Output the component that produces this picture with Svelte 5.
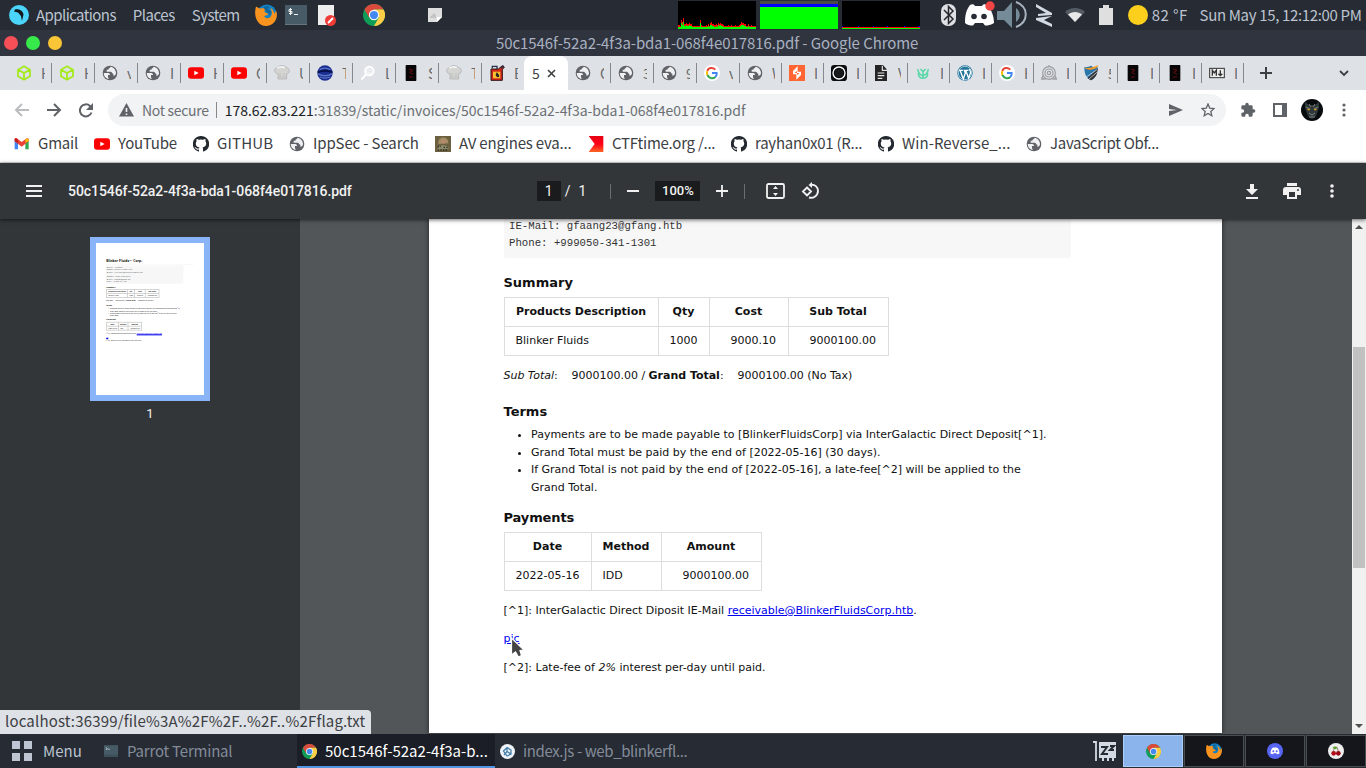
<script>
  const before = [
    ['cube', 'H'], ['cube', 'H'], ['globe', 'v'], ['globe', 'I'], ['youtube', 'H'], ['youtube', 'C'],
    ['chef', 'U'], ['ball', 'T'], ['lens', 'L'], ['dark', 'S'], ['chef', 'T'], ['can', 'E']
  ];
  const after = [
    ['globe', 'C'], ['globe', '3'], ['globe', '9'], ['google', 'v'], ['globe', 'W'], ['burp', 'I'],
    ['ring', 'I'], ['file', 'V'], ['owl', 'I'], ['wordpress', 'I'], ['google', 'H'], ['badge', 'I'],
    ['shield', '5'], ['dark', 'I'], ['dark', 'I'], ['markdown', 'I']
  ];
  const bookmarks = [
    ['gmail', 'Gmail', 40, 22], ['youtube', 'YouTube', 59, 102], ['github', 'GITHUB', 56, 201],
    ['globe', 'IppSec - Search', 106, 297], ['photo', 'AV engines eva...', 113, 443],
    ['ctf', 'CTFtime.org /...', 103, 596], ['github', 'rayhan0x01 (R...', 107, 739],
    ['github', 'Win-Reverse_...', 108, 886], ['globe', 'JavaScript Obf...', 109, 1034]
  ];
  const cpu = [2,2,1,7,5,9,3,3,4,3,3,4,3,3,1,1,1,1,1,1,1,1,7,2,1,1,1,1,2,1,3,1,4,5,3,3,2,2,3,2,4,3,4,3,3,2,1,1,1,1,2,1,1,2,1,1,1,2,1,1,1,2,3,5,4,4,3,3,1,1,3,1,1,2,1,1,1,1];

  // Spreads the letters of a label evenly so that it takes up a given width.
  function fit(node, width) {
    const n = node.textContent.trim().length;
    const extra = width - node.offsetWidth;
    node.style.letterSpacing = extra / n + 'px';
  }
</script>

{#snippet icon(name, size = 16)}
  <svg class="icon" width={size} height={size} viewBox="0 0 24 24">
    {#if name === 'cube'}
      <path d="M12 2 21 7v10l-9 5-9-5V7z M3 7l9 5 9-5M12 12v10" fill="none" stroke="#a3ea18" stroke-width="2.6" stroke-linejoin="round" />
    {:else if name === 'globe'}
      <circle cx="12" cy="12" r="11" fill="#5f6368" />
      <path d="M13 2.500c-1 2.500-3.500 2-3.500 4.500H7v3h6c2 0 2 3 4 3v3c3 0 4-2 4-4 0-5-4-9-8-9.500zM2.700 12H8c3 0 4 1 4 3H9v3c0 1 1 1 1 3-4-.5-7.500-4.500-7.300-9z" fill="#eef0f2" />
    {:else if name === 'youtube'}
      <rect x="0" y="3.500" width="24" height="17" rx="4.500" fill="#f00" /><path d="m9.500 8.500 6.500 3.500-6.500 3.500z" fill="#fff" />
    {:else if name === 'chef'}
      <path d="M6 21V13C0 13-1 5 5 4c3-4 11-4 14 0 6 1 5 9 0 9v8z" fill="#d4d4d2" stroke="#aaa" /><path d="M6 18h13M9 12v5M15 12v5" stroke="#b8b8b8" />
      <path d="M5 5c4-3 7-3 11-1" fill="none" stroke="#fff" stroke-width="2" />
    {:else if name === 'ball'}
      <circle cx="12" cy="12" r="11.500" fill="#1c2f91" /><path d="M4 7c5-3 11-3 16 0M1 13c7 4 15 4 22 0M4 18c5 2 11 2 16 0" fill="none" stroke="#5b75c4" stroke-width="2" /><path d="M1 11c7-3 15-3 22 0" fill="none" stroke="#07104b" stroke-width="3" />
    {:else if name === 'lens'}
      <circle cx="14" cy="9" r="6.500" fill="#eef0f2" stroke="#fff" stroke-width="2.500" /><path d="m9 14-7 8" stroke="#fff" stroke-width="3" /><circle cx="15" cy="8" r="2" fill="#fff" stroke="#cfd6dc" />
    {:else if name === 'dark'}
      <rect x="4" y="0" width="16" height="24" rx="1" fill="#070505" /><path d="m9 6 6 2-5 3 5 3M9 18h6" fill="none" stroke="#6d1010" stroke-width="1.400" />
    {:else if name === 'can'}
      <path d="M3 6h11l6-5 3 2-3 4v16H3z" fill="#cf2418" stroke="#301616" stroke-width="1.500" /><path d="M5 5V2h7v4M18 5l4-4" fill="none" stroke="#24344b" stroke-width="2" /><path d="M6 10h11v10H6z" fill="#f5bd2f" /><path d="M12 11c-6 7 5 10 3 4z" fill="#242424" />
    {:else if name === 'google'}
      <circle cx="12" cy="12" r="12" fill="#fff" /><g fill="none" stroke-width="3"><path d="M17 7C12 2 6 5 5 9" stroke="#ea4335" /><path d="M5 9a8 8 0 0 0 0 6" stroke="#fbbc05" /><path d="M5 15c3 6 9 6 12 3" stroke="#34a853" /><path d="M17 18c2-2 2.500-4 2-6h-7" stroke="#4285f4" /></g>
    {:else if name === 'burp'}
      <path d="M0 0h24v24H0z" fill="#ff6633" /><path d="M13 2v8h5v2h-6V9L6 14V9zM11 22v-8H6v-2h6v3l6-5v5z" fill="#fff" />
    {:else if name === 'ring'}
      <rect width="24" height="24" rx="5" fill="#0b0d0e" /><circle cx="12" cy="12" r="9" fill="none" stroke="#fff" stroke-width="2" /><circle cx="12" cy="12" r="6.500" fill="#17191b" />
    {:else if name === 'file'}
      <path d="M3 0h12l6 7v17H3z" fill="#252525" /><path d="M14 1v7h7M7 12h10M7 16h10M7 20h7" fill="none" stroke="#e5e5e5" stroke-width="1.800" />
    {:else if name === 'owl'}
      <path d="M4 6c1 7 4 9 8 10 4-1 7-3 8-10M5 12c0 6 3 8 7 8s7-2 7-8M8 6l4 4 4-4M12 10v9" fill="none" stroke="#59d8a8" stroke-width="2.300" />
    {:else if name === 'wordpress'}
      <circle cx="12" cy="12" r="11.500" fill="#21759b" /><circle cx="12" cy="12" r="10" fill="none" stroke="#e6f2f8" /><path d="M3 8h6M4.500 8l5 13 3-9-1.500-4h6M13 8l4.500 12 3-9c.4-2-2-3-2-5" fill="none" stroke="#fff" stroke-width="2" />
    {:else if name === 'badge'}
      <g fill="none" stroke="#9c9fa2" stroke-width="1.800"><circle cx="12" cy="12" r="9.500" /><circle cx="12" cy="12" r="6" /><circle cx="12" cy="12" r="2.500" /><path d="M12 0v3" /><path d="M3 16 1 21h6M21 16l2 5h-6" stroke-width="2" /></g>
    {:else if name === 'shield'}
      <path d="M2 3c4 1 7-1 10-2 3 2 6 3 10 2 0 9-2 16-10 20C4 19 2 12 2 3z" fill="#2b75ad" /><path d="M22 5 7 20l5 3c7-4 10-9 10-18z" fill="#333" /><path d="M1 4c8 1 14 0 22-4-2 6-8 7-14 7C7 6 4 6 1 4z" fill="#f49a20" /><path d="m5 18 16-11M9 21 22 10" stroke="#e8eef2" />
    {:else if name === 'markdown'}
      <rect x="1" y="5" width="22" height="14" fill="#eee" stroke="#333" stroke-width="1.500" /><path d="M5 16V8l3 4 3-4v8M17 8v7m-3-2 3 3 3-3" fill="none" stroke="#333" stroke-width="2" />
    {:else if name === 'gmail'}
      <path d="M1 20V5l5 4v11z" fill="#4285f4" /><path d="M17 20V9l5-4v15z" fill="#34a853" /><path d="M1 8V5c0-2 3-2 4-1l6.500 5L18 4c1-1 4-1 4 1v3l-10.500 8z" fill="#ea4335" /><path d="M17 10V5l2-1c2-.5 3 .5 3 2v2z" fill="#fbbc04" /><path d="M1 8V5c0-1 1-2 2-2l3 2v6z" fill="#c5221f" />
    {:else if name === 'github'}
      <path d="M12 0a12 12 0 0 0-4 23.400c.7.1 1-.3 1-.7v-2.300c-4 .8-5-1.600-5-1.600-.5-1-1.200-1.700-1.200-1.700-1-.7.100-.7.100-.7 1.200 0 1.800 1.200 1.800 1.200 1 1.800 2.800 1.300 4.300 1 0-.8.400-1.300.800-1.600C6.500 16.700 4.200 15.700 4.200 11c0-1.300.5-2.400 1.200-3.200-.1-.4-.5-1.600.1-3.300 0 0 1-.3 3.400 1.200a12 12 0 0 1 6.200 0c2.400-1.500 3.400-1.200 3.400-1.200.6 1.700.2 2.900.1 3.300.7.800 1.200 1.900 1.200 3.200 0 4.700-2.900 5.700-5.600 6 .5.400.8 1.100.8 2.200v3.500c0 .4.300.8 1 .7A12 12 0 0 0 12 0z" fill="#24292f" />
    {:else if name === 'photo'}
      <rect width="24" height="24" fill="#6b6140" /><path d="M5 12c-2-13 16-13 15-1z" fill="#a08b64" /><circle cx="13" cy="8" r="3.500" fill="#b58a6b" /><path d="M3 21c2-9 16-9 18-2z" fill="#8d8b6c" /><path d="M4 16h5m4 1h6M4 21h14" stroke="#312f28" stroke-width="2" stroke-dasharray="2 2" />
    {:else if name === 'ctf'}
      <defs><linearGradient id="red" x2="0" y2="1"><stop stop-color="#e60012" /><stop offset=".5" stop-color="#ff0019" /><stop offset="1" stop-color="#ff6424" /></linearGradient></defs><path d="M1 0h22v24H1l9-12z" fill="url(#red)" />
    {:else if name === 'chrome'}
      <circle cx="12" cy="12" r="12" fill="#109d58" /><path d="M1.600 6A12 12 0 0 1 22.400 6H12l-5.200 9z" fill="#dc4a3d" /><path d="M22.400 6A12 12 0 0 1 12 24l5.200-9L12 6z" fill="#ffcd46" /><circle cx="12" cy="12" r="5.600" fill="#fff" /><circle cx="12" cy="12" r="4.500" fill="#4688f1" />
    {:else if name === 'firefox'}
      <circle cx="13" cy="11" r="10.500" fill="#0e82c7" /><path d="M1 3c2 0 3 2 5 2 2-1 5-1 7 0l-3 3c1 2 4 2 5 3-2 2-4 1-5 3 3 3 7 1 8-2 1-4-1-6-1-8 3 2 4 5 4 7l2-4c3 8-2 17-11 17S-2 14 1 3z" fill="#f7931e" /><path d="M9 4c2-2 5-2 7-1l-2 3 4 2-2 4-4-4z" fill="#15669d" />
    {:else if name === 'discord'}
      <circle cx="12" cy="12" r="12" fill="#5865f2" /><path d="M8 7.500c3-1 5-1 8 0 2 2.500 3 5.500 2.500 8.500l-3.500 1-1-1.500h-4L9 17l-3.500-1C5 13 6 10 8 7.500z" fill="#fff" /><circle cx="9.500" cy="12.500" r="1.500" fill="#5865f2" /><circle cx="14.500" cy="12.500" r="1.500" fill="#5865f2" />
    {:else if name === 'cherry'}
      <circle cx="12" cy="12" r="12" fill="#eee" /><circle cx="8.500" cy="15.500" r="3.500" fill="#b20e18" /><circle cx="15.500" cy="15.500" r="3.500" fill="#9b0714" /><path d="M8 13c0-3 2-5 5-7l3 7" fill="none" stroke="#604428" /><path d="M7 7c3-3 6-1 7 0-3 3-5 2-7 0z" fill="#5b9e24" />
    {:else if name === 'terminal'}
      <path d="M0 2h24v20H0z" fill="#465b65" /><path d="M0 18h24v4H0z" fill="#3d5059" /><path d="m3 6 3 2-3 2M7 9h3" fill="none" stroke="#dae2e5" stroke-width="1.300" />
    {/if}
  </svg>
{/snippet}

{#snippet tab(t)}
  <div class="tab">{@render icon(t[0])}<span class="clip">{t[1]}</span></div>
{/snippet}

{#snippet letterhead()}
  <h1>Blinker Fluids™ Corp.</h1>
  <pre>Invoice : 20220516
Company: Blinker Fluids™ Corp.
IE-Mail: receivable@BlinkerFluidsCorp.htb

Customer: GFANG Corporation.
IE-Mail: gfaang23@gfang.htb
Phone: +999050-341-1301</pre>
{/snippet}

{#snippet invoice()}
    <h2 class="first"><span use:fit={69}>Summary</span></h2>
    <table class="sum">
      <colgroup><col /><col /><col /><col /></colgroup>
      <tbody>
        <tr><th><span use:fit={130}>Products Description</span></th><th>Qty</th><th>Cost</th><th>Sub Total</th></tr>
        <tr><td>Blinker Fluids</td><td>1000</td><td class="r">9000.10</td><td class="r">9000100.00</td></tr>
      </tbody>
    </table>
    <p class="totals"><span use:fit={349}><i>Sub Total</i>:&nbsp;&nbsp;&nbsp; 9000100.00 / <b>Grand Total</b>:&nbsp;&nbsp;&nbsp; 9000100.00 (No Tax)</span></p>
    <h2 class="terms">Terms</h2>
    <ul>
      <li><span use:fit={515}>Payments are to be made payable to [BlinkerFluidsCorp] via InterGalactic Direct Deposit[^1].</span></li>
      <li><span use:fit={350}>Grand Total must be paid by the end of [2022-05-16] (30 days).</span></li>
      <li><span use:fit={490}>If Grand Total is not paid by the end of [2022-05-16], a late-fee[^2] will be applied to the</span><br /><span use:fit={66}>Grand Total.</span></li>
    </ul>
    <h2 class="pay"><span use:fit={71}>Payments</span></h2>
    <table class="due">
      <colgroup><col /><col /><col /></colgroup>
      <tbody>
        <tr><th>Date</th><th>Method</th><th>Amount</th></tr>
        <tr><td>2022-05-16</td><td>IDD</td><td class="r">9000100.00</td></tr>
      </tbody>
    </table>
    <p class="note n1"><span use:fit={413}>[^1]: InterGalactic Direct Diposit IE-Mail <u>receivable@BlinkerFluidsCorp.htb</u>.</span></p>
    <p class="note"><u>pic</u></p>
    <p class="note"><span use:fit={262}>[^2]: Late-fee of <i>2%</i> interest per-day until paid.</span></p>
{/snippet}

<div class="screen">
  <header class="panel">
    <svg class="parrot" width="20" height="20" viewBox="0 0 20 20"><circle cx="10" cy="10" r="10" fill="#4bd5fa" /><path d="M6 4.500c5-1 8 2 8.500 5L13 16l-1-5-3-3.500-4-1z" fill="#13171c" /></svg>
    <span class="m1" use:fit={80}>Applications</span>
    <span class="m2" use:fit={42}>Places</span>
    <span class="m3" use:fit={48}>System</span>
    <div class="launch">
      {@render icon('firefox', 22)}
      <svg width="22" height="20" viewBox="0 0 22 20"><path d="M0 0h22v20H0z" fill="#465b65" /><path d="M0 19h22v1H0z" fill="#63767e" /><path d="M7 4.500H4v2h3v2H4M5.500 3v7M9 9.500h4" fill="none" stroke="#f1f4f5" /></svg>
      <svg width="18" height="21" viewBox="0 0 18 21"><path d="M0 0h16v20H0z" fill="#eee" /><circle cx="12.500" cy="15.500" r="5.500" fill="#ef3c37" /><path d="m10 18 5-5" stroke="#fff" stroke-width="2" /></svg>
      <span class="chr">{@render icon('chrome', 22)}</span>
      <svg class="notepad" width="14" height="14" viewBox="0 0 14 14"><path d="M0 0h14v9l-5 5H0z" fill="#dedede" /><path d="M2 9l4-4 2 2v3H2z" fill="#c4c4c4" /><path d="M9 14V9h5z" fill="#fff" /></svg>
    </div>
    <div class="graphs">
      <svg width="78" height="28" shape-rendering="crispEdges"><path d="M0 0h78v28H0z" />
        {#each cpu as h, i}<rect x={i} y={26 - h} width="1" height={h + 2} fill="#f00" /><rect x={i} y={Math.round(27 - h * 0.7)} width="1" height={h + 1} fill="#0f0" />{/each}
      </svg>
      <svg width="78" height="28" shape-rendering="crispEdges"><path fill="#4a4a4a" d="M0 0h78v28H0z" /><path fill="#00f" d="M0 3h78v3H0z" /><path fill="#0f0" d="M0 6h78v22H0z" /></svg>
      <svg width="78" height="28" shape-rendering="crispEdges"><path d="M0 0h78v28H0z" /><path fill="#f00" d="M0 26h78v1H0z" /><path fill="#0f0" d="M0 27h78v1H0z" /><path fill="#00f" d="M0 25h1v1H0zM16 25h1v1h-1zM31 25h1v1h-1zM45 25h1v1h-1zM62 25h1v1h-1zM76 25h2v1h-2z" /></svg>
    </div>
    <svg class="tray" width="210" height="30" viewBox="0 0 210 30">
      <rect x="1" y="4" width="15" height="22" rx="7" fill="#dedfe2" /><path d="m4 10 9 9-4.500 4.500V6.500L13 11l-9 9" fill="none" stroke="#23272f" stroke-width="1.500" />
      <path d="M30 5c2-1 4-1 5 1h7c1-2 3-2 5-1 5 5 7 12 7 18-3 2-6 2.500-9 2.500L43 23h-8l-2 2.500c-3 0-6-.5-8-2.500 0-7 1-13 5-18z" fill="#fff" /><circle cx="34" cy="16.500" r="2.800" fill="#262b34" /><circle cx="44" cy="16.500" r="2.800" fill="#262b34" /><circle cx="50" cy="6" r="4.700" fill="#ef4545" />
      <path d="M57 11h7l8-9v26l-8-8h-7z" fill="#758c98" /><path d="M76 8c5 4 5 10 0 14z" fill="#758c98" /><path d="M76 2c13 5 13 20 0 25" fill="none" stroke="#a9b4c0" stroke-width="2" />
      <path d="M96 4l16 9v2l-14 1v-2l8-1-10-6zM112 16l-8 4 8 4v3L96 20v-2z" fill="#d3dae3" />
      <path d="M125 12c5-5.500 15-5.500 20 0l-10 10z" fill="#555b64" /><path d="M128 14.500c4-3.500 10-3.500 14 0l-7 7.500z" fill="#e9e9e9" />
      <path d="M159 8h4V5h6v3h4v17h-14z" fill="#dfdfdf" /><circle cx="198" cy="15" r="10" fill="#fccf1c" />
    </svg>
    <span class="temp" use:fit={36}>82 °F</span>
    <span class="clock" use:fit={162}>Sun May 15, 12:12:00 PM</span>
  </header>

  <div class="title"><div class="lights"><i></i><i></i><i></i></div><span use:fit={422}>50c1546f-52a2-4f3a-bda1-068f4e017816.pdf - Google Chrome</span></div>

  <div class="tabs">
    {#each before as t}{@render tab(t)}{/each}
    <div class="active"><span>5</span><svg width="9" height="9" viewBox="0 0 9 9"><path d="m1 1 7 7M8 1 1 8" stroke="#3c4043" stroke-width="1.600" /></svg></div>
    {#each after as t}{@render tab(t)}{/each}
    <svg class="plus" width="12" height="12"><path d="M6 0v12M0 6h12" stroke="#3c4043" stroke-width="2" /></svg>
    <svg class="chev" width="10" height="7"><path d="m1 1 4 4 4-4" fill="none" stroke="#3c4043" stroke-width="1.800" /></svg>
  </div>

  <div class="nav">
    <svg width="88" height="24" viewBox="0 0 88 24" fill="none" stroke-width="2"><path d="M15 12H2m6-6-6 6 6 6" stroke="#babcbe" /><path d="M33 12h13m-6-6 6 6-6 6" stroke="#5f6368" /><path d="M77.500 14.500A6 6 0 1 1 76 8l2 2" stroke="#5f6368" /><path d="M79 5v7h-7z" fill="#5f6368" /></svg>
    <div class="omni">
      <svg width="15" height="14" viewBox="0 0 15 14"><path d="M7.500 0 15 13.500H0z" fill="#5f6368" /><path d="M7.500 5v4M7.500 10.500v1.500" stroke="#f1f3f4" stroke-width="1.600" /></svg>
      <span class="sec" use:fit={67}>Not secure</span><i class="bar"></i>
      <span class="url" use:fit={521}><b>178.62.83.221</b>:31839/static/invoices/50c1546f-52a2-4f3a-bda1-068f4e017816.pdf</span>
      <svg class="send" width="14" height="12"><path d="m0 0 14 6-14 6V7l8-1-8-1z" fill="#5f6368" /></svg>
      <svg width="14" height="14" viewBox="0 0 14 14"><path d="m7 1 1.700 4.100 4.400.4-3.300 2.900 1 4.300L7 10.400l-3.800 2.300 1-4.300L.9 5.500l4.400-.4z" fill="none" stroke="#5f6368" stroke-width="1.300" /></svg>
    </div>
    <svg class="puzzle" width="16" height="16" viewBox="0 0 24 24"><path d="M20.500 11H19V7a2 2 0 0 0-2-2h-4V3.500a2.500 2.500 0 0 0-5 0V5H4a2 2 0 0 0-2 2v3.800h1.500a2.700 2.700 0 0 1 0 5.400H2V20a2 2 0 0 0 2 2h3.800v-1.500a2.700 2.700 0 0 1 5.400 0V22H17a2 2 0 0 0 2-2v-4h1.500a2.500 2.500 0 0 0 0-5z" fill="#5f6368" /></svg>
    <svg class="side" width="14" height="14"><path d="M0 0h14v14H0z" fill="#5f6368" /><path d="M2 2h7v10H2z" fill="#fff" /></svg>
    <svg class="avatar" width="22" height="22"><circle cx="11" cy="11" r="11" fill="#080b0d" /><path d="M4 3l4 3h6l4-3v6l-3 8-4 3-4-3-3-8z" fill="#30383b" /><path d="m5 8 4 2M17 8l-4 2M8 14l3 2 3-2M8 18h6M8 5l2 3M14 5l-2 3" stroke="#78827d" fill="none" /><path d="M6.500 10.500h2.500M13 10.500h2.500" stroke="#d49b24" stroke-width="1.400" /></svg>
    <svg class="dots" width="4" height="14" fill="#5f6368"><circle cx="2" cy="2" r="1.600" /><circle cx="2" cy="7" r="1.600" /><circle cx="2" cy="12" r="1.600" /></svg>
  </div>

  <div class="marks">
    {#each bookmarks as b, i}
      <div class="mark" style:width="{(i < 8 ? bookmarks[i + 1][3] : 1200) - b[3]}px">{@render icon(b[0])}<span use:fit={b[2]}>{b[1]}</span></div>
    {/each}
  </div>

  <div class="pdfbar">
    <svg class="burger" width="16" height="12"><path d="M0 1h16M0 6h16M0 11h16" stroke="#f1f1f1" stroke-width="2" /></svg>
    <b class="name" use:fit={284}>50c1546f-52a2-4f3a-bda1-068f4e017816.pdf</b>
    <span class="box pageno">1</span><span class="of">/</span><span>1</span>
    <i class="rule r1"></i>
    <svg class="minus" width="12" height="12"><path d="M0 6h12" stroke="#f1f1f1" stroke-width="2" /></svg>
    <span class="box zoom">100%</span>
    <svg class="add" width="12" height="12"><path d="M0 6h12M6 0v12" stroke="#f1f1f1" stroke-width="1.800" /></svg>
    <i class="rule r2"></i>
    <svg class="fitpage" width="19" height="16" viewBox="0 0 19 16"><rect x="1" y="1" width="17" height="14" rx="1.500" fill="none" stroke="#f1f1f1" stroke-width="1.800" /><path d="m9.500 3 2.500 3H7zM9.500 13 7 10h5z" fill="#f1f1f1" /></svg>
    <svg class="rot" width="19" height="18" viewBox="0 0 19 18"><path d="m6 5.500 4 4-4 4-4-4zM9 3c5-1 8 2 8 6a7 7 0 0 1-9 6.500" fill="none" stroke="#f1f1f1" stroke-width="1.900" /><path d="M11 0v6L7.500 3z" fill="#f1f1f1" /></svg>
    <svg class="down" width="12" height="15"><path d="M4 0h4v5h4l-6 6-6-6h4zM0 13h12v2H0z" fill="#f1f1f1" /></svg>
    <svg class="print" width="18" height="16" viewBox="0 0 18 16"><path d="M4 0h10v3H4zM3 4h12a3 3 0 0 1 3 3v5h-4v4H4v-4H0V7a3 3 0 0 1 3-3z" fill="#f1f1f1" /><path d="M6 9h6v5H6z" fill="#323639" /><circle cx="15" cy="7" r="1" fill="#323639" /></svg>
    <svg class="more" width="4" height="14" fill="#f1f1f1"><circle cx="2" cy="2" r="1.800" /><circle cx="2" cy="7" r="1.800" /><circle cx="2" cy="12" r="1.800" /></svg>
  </div>

  <main>
    <aside><div class="thumb"><div class="paper">{@render letterhead()}{@render invoice()}</div></div><span>1</span></aside>
    <section>
      <div class="paper scrolled">
        <pre>IE-Mail: gfaang23@gfang.htb
Phone: +999050-341-1301</pre>
        {@render invoice()}
      </div>
    </section>
    <div class="scroll"><i class="up"></i><i class="knob"></i><i class="dn"></i></div>
    <div class="status"><span use:fit={360}>localhost:36399/file%3A%2F%2F..%2F..%2Fflag.txt</span></div>
    <svg class="cursor" width="15" height="22" viewBox="0 0 15 22"><path d="M1.500 1v17l4-3 3 5 3-1.500-1.500-5 4-.5z" fill="#444" stroke="#fff" stroke-width="1.200" /></svg>
  </main>

  <footer>
    <svg class="grid" width="20" height="20"><path d="M0 0h8v8H0zM12 0h8v8h-8zM0 12h8v8H0zM12 12h8v8h-8z" fill="#bec5d3" /></svg>
    <span class="menu" use:fit={36}>Menu</span>
    <div class="task t1">{@render icon('terminal', 14)}<span use:fit={105}>Parrot Terminal</span></div>
    <div class="task t2">{@render icon('chrome', 15)}<span use:fit={163}>50c1546f-52a2-4f3a-b...</span></div>
    <div class="task t3"><svg width="15" height="15"><circle cx="7.500" cy="7.500" r="7.500" fill="#eef3f8" /><path d="M3.500 7 7 3.500 11 6v4l-4 2zM7 3.500v4l4 2.500M7 7.500 4 11" stroke="#477fab" fill="none" stroke-width="1.300" /></svg><span use:fit={164}>index.js - web_blinkerfl...</span></div>
    <svg class="sleep" width="24" height="20" viewBox="0 0 24 20"><path d="M0 1h3v19" fill="none" stroke="#d3dae3" stroke-width="1.800" /><path d="M6 1h17v16h-2v3h-2v-3h-3v3h-2v-3h-3v3H9v-3H6z" fill="#d3dae3" /><path d="M8 6h6l-5 7h6M17 5h4l-4 4h4" fill="none" stroke="#262b34" stroke-width="2" /></svg>
    <div class="desk on">{@render icon('chrome', 15)}</div>
    <div class="desk">{@render icon('firefox', 16)}</div>
    <div class="desk">{@render icon('discord', 16)}</div>
    <div class="desk">{@render icon('cherry', 16)}</div>
  </footer>
</div>

<style>
  :global(body) { margin: 0; overflow: hidden; }
  * { box-sizing: border-box; }
  svg { flex: none; display: block; }
  span, b.name { white-space: nowrap; }
  .screen { width: 1366px; height: 768px; display: flex; flex-direction: column; overflow: hidden; font: 15px/20px 'Noto Sans CJK JP', 'Noto Sans', sans-serif; color: #3c4043; }
  .screen > * { flex: none; }
  .panel { height: 30px; background: #262b34; color: #bcc3cf; display: flex; align-items: center; padding-left: 9px; }
  .m1 { margin-left: 7px; }
  .m2 { margin-left: 17px; }
  .m3 { margin-left: 17px; }
  .launch { display: flex; align-items: center; margin-left: 15px; width: 423px; }
  .launch > :global(*) { margin-right: 8px; }
  .launch > :nth-child(2) { margin-right: 11px; }
  .launch > :nth-child(3) { margin-right: 27px; }
  .launch > .chr { margin-right: 43px; }
  .graphs { display: flex; gap: 4px; }
  .tray { margin-left: 20px; }
  .temp { margin-left: 2px; }
  .clock { margin-left: 12px; }
  .title { height: 26px; background: #2f343f; color: #a9b1c0; display: flex; align-items: center; padding-left: 4px; }
  .lights { display: flex; gap: 8px; width: 492px; }
  .lights i { width: 14px; height: 14px; border-radius: 50%; background: #f64f58; }
  .lights i:nth-child(2) { background: #38e94b; }
  .lights i:nth-child(3) { background: #fbc538; }
  .tabs { height: 34px; background: #dee1e6; display: flex; align-items: center; padding-left: 9px; }
  .tab { width: 43px; height: 20px; flex: none; border-right: 1px solid #85888c; display: flex; align-items: center; padding-left: 7px; }
  .tab:nth-child(n + 18) { width: 42px; }
  .tab:nth-child(12) { border-color: transparent; }
  .clip { width: 4px; overflow: hidden; margin-left: 9px; font-size: 14px; opacity: .75; }
  .tab:nth-child(n + 18) .clip { width: 3px; }
  .active { width: 44px; margin-left: -1px; height: 34px; background: #fff; border-radius: 8px 8px 0 0; display: flex; align-items: center; padding-left: 8px; gap: 7px; font-size: 14px; }
  .plus { margin-left: 16px; }
  .chev { margin-left: 67px; }
  .nav { height: 40px; background: #fff; display: flex; align-items: center; padding-left: 14px; }
  .nav > svg:first-child { margin-right: 6px; }
  .omni { width: 1118px; height: 32px; border-radius: 16px; background: #f1f3f4; display: flex; align-items: center; padding-left: 11px; font-size: 14px; color: #6c7074; }
  .omni span { padding-bottom: 1px; }
  .sec { margin-left: 8px; }
  .bar { width: 1px; height: 16px; background: #888; margin: 0 8px 0 7px; }
  .url b { font-weight: 400; color: #202124; }
  .send { margin: 0 18px 0 auto; }
  .omni svg:last-child { margin-right: 11px; }
  .puzzle { margin-left: 14px; }
  .side { margin-left: 17px; }
  .avatar { margin-left: 14px; }
  .dots { margin-left: 19px; }
  .marks { height: 33px; background: #fff; border-bottom: 1px solid #dadce0; display: flex; align-items: center; padding: 0 0 5px 14px; }
  .mark { display: flex; align-items: center; gap: 8px; flex: none; }
  .mark span { padding-bottom: 1px; }
  .pdfbar { height: 56px; background: #323639; color: #f1f1f1; display: flex; align-items: center; padding-left: 26px; font: 14px/20px Roboto, sans-serif; box-shadow: 0 1px 4px #0009; position: relative; z-index: 2; }
  .burger { margin-right: 26px; }
  .name { font-weight: 500; }
  .box { background: #191b1c; height: 20px; text-align: center; }
  .pageno { width: 24px; margin-left: 185px; }
  .of { margin: 0 8px 0 4px; }
  .rule { width: 1px; height: 15px; background: #6b6e70; }
  .r1 { margin-left: 24px; }
  .minus { margin: 0 16px; }
  .zoom { width: 45px; font-weight: 500; font-size: 13px; }
  .add { margin: 0 16px; }
  .fitpage { margin-left: 21px; }
  .rot { margin-left: 16px; }
  .down { margin-left: auto; }
  .print { margin-left: 25px; }
  .more { margin: 0 32px 0 29px; }
  main { height: 515px; display: flex; background: #525659; position: relative; overflow: hidden; }
  aside { width: 300px; background: #323639; padding-top: 18px; display: flex; flex-direction: column; align-items: center; color: #f1f1f1; font: 13px/20px Roboto, sans-serif; }
  aside > span { margin-top: 3px; }
  .thumb { width: 120px; height: 164px; border: 6px solid #8ab4f8; overflow: hidden; }
  .thumb .paper { transform: scale(.1362); transform-origin: 0 0; }
  .thumb th, .thumb td { border: 6px solid #ccc; }
  .thumb u { text-decoration-thickness: 8px; }
  section { width: 1052px; padding-left: 129px; overflow: hidden; height: 515px; }
  .paper { width: 793px; height: 1122px; background: #fff; color: #111; padding: 115px 75px 0 74.5px; font: 11px/18px 'DejaVu Sans', sans-serif; }
  .scrolled { height: 515px; padding-top: 0; box-shadow: 0 0 5px #0009; }
  .paper span { display: inline-block; }
  h1 { font-size: 22px; line-height: 30px; height: 42px; border-bottom: 3px solid #eee; margin: 0 0 8px; }
  pre { margin: 0; width: 567px; height: 135px; background: #f7f7f7; border-radius: 2px; padding: 8px 4px; font: 10.700px/17px 'Liberation Mono', monospace; color: #333; }
  .scrolled pre { height: 40px; padding: 0 5px; margin: -1px 0 0 .5px; border-radius: 0 0 2px 2px; }
  h2 { font-size: 13px; line-height: 18px; margin: 0; }
  h2.first { margin-top: 16px; }
  table { border-collapse: collapse; table-layout: fixed; margin: 5px 0 0 .5px; }
  .sum { width: 385px; }
  .sum col:nth-child(1) { width: 154px; }
  .sum col:nth-child(2) { width: 51px; }
  .sum col:nth-child(3) { width: 79px; }
  .sum col:nth-child(4) { width: 100px; }
  .due { width: 258px; }
  .due col:nth-child(1) { width: 87px; }
  .due col:nth-child(2) { width: 70px; }
  .due col:nth-child(3) { width: 100px; }
  th, td { border: 1px solid #ddd; height: 29px; padding: 0 12px 0 10.500px; text-align: left; line-height: 18px; white-space: nowrap; }
  th { text-align: center; padding: 0 1px 0 0; }
  td.r { text-align: right; }
  .totals { margin: 11px 0 0; }
  .terms { margin-top: 18px; }
  ul { margin: 5px 0 0; padding-left: 27.500px; line-height: 17.700px; }
  .pay { margin-top: 12px; }
  .note { margin: 10.500px 0 0; }
  .n1 { margin-top: 11px; }
  .paper u { color: #00e; }
  .scroll { width: 14px; background: #f1f1f1; display: flex; flex-direction: column; align-items: center; height: 515px; }
  .up, .dn { border: 4px solid transparent; border-bottom-color: #505050; border-top: 0; margin-top: 6px; }
  .knob { width: 12px; height: 221px; background: #c1c1c1; margin-top: 118px; }
  .dn { border: 4px solid transparent; border-top-color: #505050; border-bottom: 0; margin-top: 156px; }
  .status { position: absolute; left: 0; bottom: 0; width: 371px; height: 24px; background: #dee1e6; border-radius: 0 4px 0 0; padding: 1px 5px; z-index: 2; }
  .cursor { position: absolute; left: 510px; top: 418px; }
  footer { height: 34px; background: #262b34; color: #bcc3cf; display: flex; align-items: center; }
  .grid { margin-left: 12px; }
  .menu { margin-left: 11px; width: 36px; }
  .task { display: flex; align-items: center; height: 34px; flex: none; }
  .t1 { margin-left: 25px; width: 193px; gap: 9px; color: #848c99; }
  .t2 { width: 198px; background: #1b1e26; border-bottom: 2px solid #5294e2; padding: 2px 0 0 5px; gap: 8px; color: #fff; }
  .t3 { padding-left: 5px; gap: 8px; color: #848c99; }
  .sleep { margin: 0 6px 0 auto; }
  .desk { width: 60px; height: 32px; margin-right: 1px; background: #14161b; border: 1px solid #4a4d50; display: flex; align-items: center; justify-content: center; }
  .desk:last-child { margin-right: 0; }
  .desk.on { background: #8ab4eb; border-color: #aad0fa; }
</style>
